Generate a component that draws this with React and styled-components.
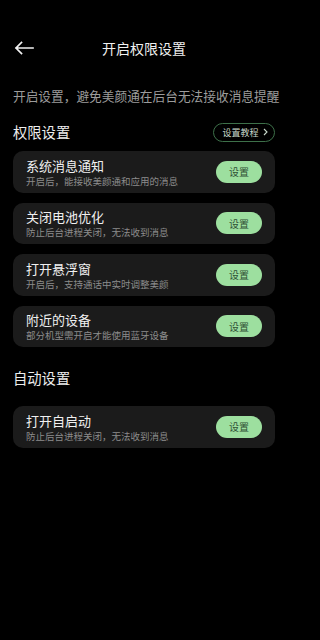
import React from "react";
import styled, { createGlobalStyle } from "styled-components";

const Global = createGlobalStyle`
  html, body { margin: 0; padding: 0; background: #000; }
  body { font-family: "Noto Sans CJK SC", "Noto Sans", sans-serif; -webkit-font-smoothing: antialiased; }
  * { box-sizing: border-box; }
`;

const Page = styled.div`
  width: 288px;
  min-height: 640px;
  background: #000;
  color: #eeeeee;
  display: flex;
  flex-direction: column;
`;

const Header = styled.div`
  position: relative;
  height: 40px;
  margin-top: 28px;
  display: flex;
  align-items: center;
  justify-content: center;
`;

const Back = styled.button`
  position: absolute;
  left: 13px;
  top: 10px;
  width: 22px;
  height: 20px;
  padding: 0;
  border: 0;
  background: transparent;
  display: flex;
  align-items: center;
  justify-content: center;
`;

const Title = styled.div`
  font-size: 14px;
  line-height: 20px;
  color: #f0f0f0;
`;

const Intro = styled.div`
  margin-top: 19px;
  padding-left: 13px;
  font-size: 12.7px;
  line-height: 18px;
  color: #9c9c9c;
  white-space: nowrap;
`;

const SectionRow = styled.div`
  display: flex;
  align-items: center;
  justify-content: space-between;
  padding: 0 13px;
  margin-top: ${(p) => p.$mt}px;
  height: 20px;
`;

const SectionTitle = styled.div`
  font-size: 14.3px;
  line-height: 20px;
  color: #ececec;
`;

const Tutorial = styled.button`
  height: 19px;
  width: 62px;
  border: 1px solid #3d7049;
  border-radius: 10px;
  background: transparent;
  color: #c9d9cb;
  font-family: inherit;
  font-size: 9px;
  display: flex;
  align-items: center;
  justify-content: center;
  gap: 4px;
  padding: 0 0 0 2px;
`;

const List = styled.div`
  display: flex;
  flex-direction: column;
  gap: 10px;
  padding: 0 13px;
  margin-top: ${(p) => p.$mt}px;
`;

const Card = styled.div`
  height: 41.5px;
  background: #1b1b1b;
  border-radius: 10px;
  display: flex;
  align-items: center;
  justify-content: space-between;
  padding: 0 13px 0 13px;
`;

const Texts = styled.div`
  display: flex;
  flex-direction: column;
  gap: 1px;
  padding-top: 1px;
`;

const CardTitle = styled.div`
  font-size: 13px;
  line-height: 17px;
  color: #f0f0f0;
`;

const CardSub = styled.div`
  font-size: 9.5px;
  line-height: 13px;
  color: #8c8c8c;
  white-space: nowrap;
`;

const SetBtn = styled.button`
  width: 46px;
  height: 22px;
  border: 0;
  border-radius: 11px;
  background: #9ddf9f;
  color: #2f4f35;
  font-family: inherit;
  font-size: 10px;
  padding: 0;
`;

const perms = [
  { t: "系统消息通知", s: "开启后，能接收美颜通和应用的消息" },
  { t: "关闭电池优化", s: "防止后台进程关闭，无法收到消息" },
  { t: "打开悬浮窗", s: "开启后，支持通话中实时调整美颜" },
  { t: "附近的设备", s: "部分机型需开启才能使用蓝牙设备" },
];

const autos = [{ t: "打开自启动", s: "防止后台进程关闭，无法收到消息" }];

function Item({ t, s }) {
  return (
    <Card>
      <Texts>
        <CardTitle>{t}</CardTitle>
        <CardSub>{s}</CardSub>
      </Texts>
      <SetBtn>设置</SetBtn>
    </Card>
  );
}

export default function App() {
  return (
    <Page>
      <Global />
      <Header>
        <Back aria-label="返回">
          <svg width="20" height="14" viewBox="0 0 20 14" fill="none">
            <path d="M19 7H2M7.5 1.5L2 7l5.5 5.5" stroke="#f2f2f2" strokeWidth="1.7" strokeLinecap="square" />
          </svg>
        </Back>
        <Title>开启权限设置</Title>
      </Header>
      <Intro>开启设置，避免美颜通在后台无法接收消息提醒</Intro>
      <SectionRow $mt={17}>
        <SectionTitle>权限设置</SectionTitle>
        <Tutorial>
          设置教程
          <svg width="5" height="8" viewBox="0 0 5 8" fill="none">
            <path d="M1 1l3 3-3 3" stroke="#c9d9cb" strokeWidth="1.1" />
          </svg>
        </Tutorial>
      </SectionRow>
      <List $mt={9}>
        {perms.map((p) => (
          <Item key={p.t} {...p} />
        ))}
      </List>
      <SectionRow $mt={21}>
        <SectionTitle>自动设置</SectionTitle>
      </SectionRow>
      <List $mt={18}>
        {autos.map((p) => (
          <Item key={p.t} {...p} />
        ))}
      </List>
    </Page>
  );
}
